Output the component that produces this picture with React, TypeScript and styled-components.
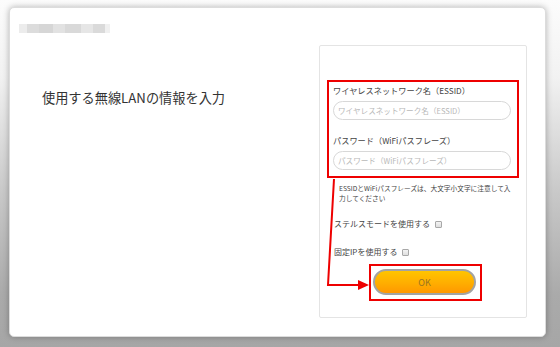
import React from "react";
import styled, { createGlobalStyle } from "styled-components";

const GlobalStyle = createGlobalStyle`
  html, body {
    margin: 0;
    padding: 0;
  }
  body {
    font-family: "Noto Sans CJK JP", "Noto Sans", sans-serif;
    color: #333;
  }
`;

const Page = styled.div`
  width: 560px;
  height: 347px;
  box-sizing: border-box;
  padding: 7px 14px 10px 9px;
  background: linear-gradient(to bottom, #fcfcfc 0%, #f2f2f2 22%, #c9c9c9 55%, #aaaaaa 85%, #a6a6a6 100%);
  overflow: hidden;
`;

const Card = styled.div`
  height: 100%;
  box-sizing: border-box;
  background: #fff;
  border: 1px solid #dcdcdc;
  border-radius: 5px;
  box-shadow: 0 0 6px rgba(0, 0, 0, 0.28);
  padding: 16px 0 0 9px;
`;

const BlurredTitle = styled.div`
  width: 91px;
  height: 9px;
  background: linear-gradient(
    to right,
    #ececec 0 8px,
    #dcdcdc 8px 20px,
    #d6d6d6 20px 34px,
    #e2e2e2 34px 46px,
    #d9d9d9 46px 62px,
    #e6e6e6 62px 74px,
    #dadada 74px 86px,
    #f0f0f0 86px 91px
  );
  filter: blur(0.6px);
`;

const Body = styled.div`
  display: flex;
  margin-top: 12px;
`;

const Intro = styled.div`
  width: 300px;
  padding: 43px 0 0 23px;
  box-sizing: border-box;
`;

const Heading = styled.h1`
  margin: 0;
  font-size: 13.2px;
  line-height: 20px;
  font-weight: 400;
  color: #333;
`;

const Panel = styled.div`
  position: relative;
  width: 208px;
  height: 273px;
  box-sizing: border-box;
  border: 1px solid #e4e4e4;
  border-radius: 2px;
  padding: 34px 0 0 7px;
`;

const Highlight = styled.div<{ $pad: string }>`
  border: 2px solid #ee0000;
  box-sizing: border-box;
  padding: ${({ $pad }) => $pad};
`;

const Fields = styled.div`
  width: 192px;
  display: flex;
  flex-direction: column;
  gap: 13px;
`;

const Field = styled.label`
  display: flex;
  flex-direction: column;
  gap: 4px;
`;

const Label = styled.span`
  font-size: 8.2px;
  line-height: 14px;
  color: #444;
`;

const Input = styled.input`
  height: 19px;
  width: 178px;
  box-sizing: border-box;
  border: 1px solid #d8d8d8;
  border-radius: 10px;
  padding: 0 4px;
  font-family: inherit;
  font-size: 7.6px;
  color: #444;
  outline: none;
  background: #fff;
  &::placeholder {
    color: #b8b8b8;
  }
`;

const Note = styled.p`
  margin: 5px 0 0 12px;
  font-size: 6.7px;
  line-height: 10px;
  color: #444;
  white-space: nowrap;
`;

const Option = styled.label`
  display: flex;
  align-items: center;
  gap: 5px;
  margin: 14px 0 0 7px;
  font-size: 8px;
  line-height: 14px;
  color: #444;
`;

const Check = styled.span`
  width: 5px;
  height: 5px;
  border: 1px solid #a8a8a8;
  background: linear-gradient(#f4f4f4, #dedede);
  border-radius: 1px;
`;

const ButtonWrap = styled.div`
  margin: 5px 0 0 42px;
  width: 113px;
`;

const OkButton = styled.button`
  display: block;
  width: 103px;
  height: 26px;
  border: 2px solid #a3a3a3;
  border-radius: 13px;
  background: linear-gradient(to bottom, #ffc400 0%, #ffb000 50%, #ff9800 100%);
  color: #9a7420;
  font-family: inherit;
  font-size: 9px;
  cursor: pointer;
`;

const Arrow = styled.svg`
  position: absolute;
  left: 0;
  top: 0;
  pointer-events: none;
`;

export default function App() {
  return (
    <>
      <GlobalStyle />
      <Page>
        <Card>
          <BlurredTitle />
          <Body>
            <Intro>
              <Heading>使用する無線LANの情報を入力</Heading>
            </Intro>
            <Panel>
              <Highlight $pad="1px 0 6px 4px" as={Fields}>
                <Field>
                  <Label>ワイヤレスネットワーク名（ESSID）</Label>
                  <Input placeholder="ワイヤレスネットワーク名（ESSID）" />
                </Field>
                <Field>
                  <Label>パスワード（WiFiパスフレーズ）</Label>
                  <Input placeholder="パスワード（WiFiパスフレーズ）" />
                </Field>
              </Highlight>
              <Note>
                ESSIDとWiFiパスフレーズは、大文字小文字に注意して入
                <br />
                力してください
              </Note>
              <Option>
                ステルスモードを使用する<Check />
              </Option>
              <Option>
                固定IPを使用する<Check />
              </Option>
              <ButtonWrap>
                <Highlight $pad="3px 4px 4px 2px">
                  <OkButton>OK</OkButton>
                </Highlight>
              </ButtonWrap>
              <Arrow width="208" height="273" viewBox="0 0 208 273">
                <polyline points="14,133 8,239 40,239" fill="none" stroke="#ee0000" strokeWidth="2" />
                <polygon points="38,234 49,239 38,244" fill="#ee0000" />
              </Arrow>
            </Panel>
          </Body>
        </Card>
      </Page>
    </>
  );
}
